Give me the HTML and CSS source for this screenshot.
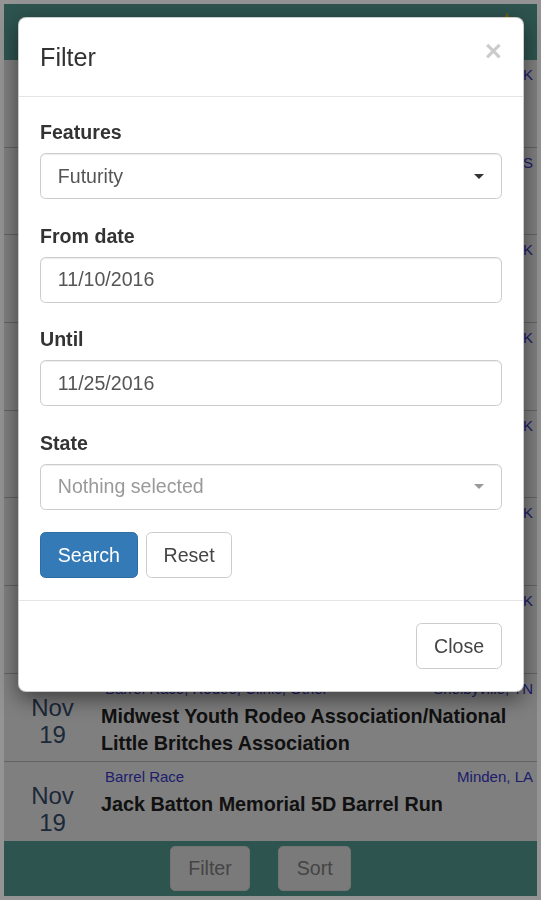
FILE: index.html
```html
<!DOCTYPE html>
<html lang="en">
<head>
<meta charset="utf-8">
<title>Events - Filter</title>
<link rel="stylesheet" href="styles.css">
</head>
<body>
<div class="device">
  <header class="topbar">
    <svg class="star" width="14" height="14" viewBox="0 0 24 24"><path d="M12 1l3.1 7.3 7.9.7-6 5.2 1.8 7.8L12 17.9 5.2 22l1.8-7.8-6-5.2 7.9-.7z" fill="#f2c200"/></svg>
  </header>
  <ul class="events">
    <li class="event"><div class="date">Nov<br>11</div><div class="info"><div class="meta"><span class="cat">Barrel Race</span><span class="loc">Guthrie, OK</span></div><div class="title">Fall Futurity &amp; Derby</div></div></li>
    <li class="event"><div class="date">Nov<br>11</div><div class="info"><div class="meta"><span class="cat">Barrel Race, Futurity</span><span class="loc">Topeka, KS</span></div><div class="title">Kansas Barrel Futurity</div></div></li>
    <li class="event"><div class="date">Nov<br>12</div><div class="info"><div class="meta"><span class="cat">Barrel Race</span><span class="loc">Ardmore, OK</span></div><div class="title">Ardmore Fall Classic</div></div></li>
    <li class="event"><div class="date">Nov<br>12</div><div class="info"><div class="meta"><span class="cat">Futurity</span><span class="loc">Duncan, OK</span></div><div class="title">Duncan Futurity Weekend</div></div></li>
    <li class="event"><div class="date">Nov<br>13</div><div class="info"><div class="meta"><span class="cat">Barrel Race</span><span class="loc">Shawnee, OK</span></div><div class="title">Shawnee 4D Jackpot</div></div></li>
    <li class="event"><div class="date">Nov<br>17</div><div class="info"><div class="meta"><span class="cat">Futurity, Derby</span><span class="loc">Enid, OK</span></div><div class="title">Enid Winter Futurity</div></div></li>
    <li class="event"><div class="date">Nov<br>18</div><div class="info"><div class="meta"><span class="cat">Barrel Race</span><span class="loc">Stillwater, OK</span></div><div class="title">Cowboy Country Barrel Bash</div></div></li>
    <li class="event"><div class="date">Nov<br>19</div><div class="info"><div class="meta"><span class="cat">Barrel Race, Rodeo, Clinic, Other</span><span class="loc">Shelbyville, TN</span></div><div class="title">Midwest Youth Rodeo Association/National Little Britches Association</div></div></li>
    <li class="event"><div class="date">Nov<br>19</div><div class="info"><div class="meta"><span class="cat">Barrel Race</span><span class="loc">Minden, LA</span></div><div class="title">Jack Batton Memorial 5D Barrel Run</div></div></li>
  </ul>
  <footer class="bottombar">
    <button class="bar-btn" type="button">Filter</button>
    <button class="bar-btn" type="button">Sort</button>
  </footer>
</div>

<div class="backdrop"></div>

<div class="modal">
  <div class="modal-header">
    <button class="close" type="button">×</button>
    <h4 class="modal-title">Filter</h4>
  </div>
  <div class="modal-body">
    <div class="form-group">
      <label class="label">Features</label>
      <button class="form-control select" type="button"><span>Futurity</span><span class="caret"></span></button>
    </div>
    <div class="form-group">
      <label class="label">From date</label>
      <input class="form-control" type="text" value="11/10/2016">
    </div>
    <div class="form-group">
      <label class="label">Until</label>
      <input class="form-control" type="text" value="11/25/2016">
    </div>
    <div class="form-group">
      <label class="label">State</label>
      <button class="form-control select placeholder" type="button"><span>Nothing selected</span><span class="caret"></span></button>
    </div>
    <div class="actions">
      <button class="btn btn-primary" type="button">Search</button>
      <button class="btn btn-default" type="button">Reset</button>
    </div>
  </div>
  <div class="modal-footer">
    <button class="btn btn-default" type="button">Close</button>
  </div>
</div>
</body>
</html>
```
FILE: styles.css
```css
html, body {
  margin: 0;
  padding: 0;
}
body {
  font-family: "Liberation Sans", Arial, sans-serif;
  background: #949494;
  width: 541px;
  height: 900px;
  overflow: hidden;
}
.device {
  height: 900px;
  box-sizing: border-box;
  border: 4px solid #949494;
  background: #ffffff;
  display: flex;
  flex-direction: column;
  overflow: hidden;
}
.topbar {
  flex: none;
  height: 56px;
  background: #5ca8a0;
  display: flex;
  justify-content: flex-end;
  align-items: flex-start;
  padding: 8px 23px 0 0;
  box-sizing: border-box;
}
.events {
  list-style: none;
  margin: 0;
  padding: 0;
  flex: 1;
  overflow: hidden;
}
.event {
  height: 87.7px;
  box-sizing: border-box;
  border-bottom: 1px solid #c6c6c6;
  display: flex;
}
.date {
  width: 97px;
  flex: none;
  text-align: center;
  padding-top: 20px;
  font-size: 24px;
  line-height: 27.5px;
  color: #3a5173;
}
.info {
  flex: 1;
  padding-right: 4px;
  min-width: 0;
}
.meta {
  display: flex;
  justify-content: space-between;
  font-size: 15px;
  line-height: 22px;
  padding-top: 4px;
  color: #3b3bd9;
}
.cat {
  padding-left: 4px;
}
.title {
  font-weight: bold;
  font-size: 19.8px;
  line-height: 27px;
  margin-top: 3px;
  color: #222222;
}
.bottombar {
  flex: none;
  height: 55px;
  background: #5ca8a0;
  display: flex;
  justify-content: center;
  align-items: center;
  gap: 28px;
  padding-right: 20px;
}
.bar-btn {
  height: 45px;
  padding: 0 17.5px;
  font-family: inherit;
  font-size: 19.6px;
  color: #8a8a8a;
  background: #f4f4f4;
  border: 1px solid #e6e6e6;
  border-radius: 5px;
}

.backdrop {
  position: fixed;
  top: 4px;
  left: 4px;
  right: 4px;
  bottom: 4px;
  background: rgba(0, 0, 0, 0.5);
}
.modal {
  position: fixed;
  top: 17px;
  left: 18px;
  width: 506px;
  box-sizing: border-box;
  background: #ffffff;
  border: 1px solid rgba(0, 0, 0, 0.2);
  border-radius: 8px;
  box-shadow: 0 7px 21px rgba(0, 0, 0, 0.5);
  color: #333333;
}
.modal-header {
  padding: 21px 21px;
  border-bottom: 1px solid #e5e5e5;
}
.modal-title {
  margin: 0;
  font-size: 25.2px;
  line-height: 36px;
  font-weight: normal;
  color: #333333;
}
.close {
  float: right;
  margin-top: -2.8px;
  padding: 0;
  border: 0;
  background: transparent;
  font-family: inherit;
  font-size: 29.4px;
  font-weight: bold;
  line-height: 1;
  color: #000000;
  opacity: 0.2;
}
.modal-body {
  padding: 21px 21px 22px;
}
.form-group {
  margin-bottom: 22.5px;
}
.label {
  display: block;
  font-weight: bold;
  font-size: 19.6px;
  line-height: 28px;
  margin-bottom: 7px;
  color: #333333;
}
.form-control {
  display: flex;
  align-items: center;
  justify-content: space-between;
  width: 100%;
  height: 46px;
  box-sizing: border-box;
  padding: 0 16.8px;
  border: 1px solid #cccccc;
  border-radius: 5.6px;
  background: #ffffff;
  box-shadow: inset 0 1px 1px rgba(0, 0, 0, 0.075);
  font-family: inherit;
  font-size: 19.6px;
  color: #555555;
  text-align: left;
  outline: none;
}
.caret {
  width: 0;
  height: 0;
  border-top: 5.6px solid #333333;
  border-left: 5.6px solid transparent;
  border-right: 5.6px solid transparent;
}
.placeholder {
  color: #999999;
}
.placeholder .caret {
  border-top-color: #999999;
}
.actions {
  display: flex;
  gap: 8px;
}
.btn {
  height: 46px;
  padding: 0 16.8px;
  font-family: inherit;
  font-size: 19.6px;
  border: 1px solid #cccccc;
  border-radius: 5.6px;
  background: #ffffff;
  color: #444444;
}
.btn-primary {
  background: #337ab7;
  border-color: #2e6da4;
  color: #ffffff;
}
.modal-footer {
  padding: 22px 21px;
  border-top: 1px solid #e5e5e5;
  display: flex;
  justify-content: flex-end;
}
```
